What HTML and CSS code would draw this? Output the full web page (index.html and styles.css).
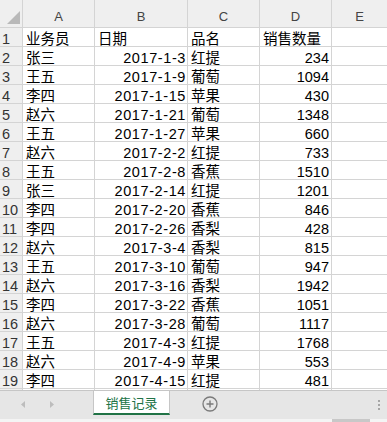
FILE: index.html
```html
<!DOCTYPE html>
<html lang="zh">
<head>
<meta charset="utf-8">
<title>销售记录</title>
<link rel="stylesheet" href="styles.css">
</head>
<body>
<div class="app">
  <div class="sheet">
    <div class="corner"><svg width="22" height="27" viewBox="0 0 22 27"><polygon points="20,11 20,24 7,24" fill="#b9b9b9"/></svg></div>
    <div class="colh">A</div><div class="colh">B</div><div class="colh">C</div><div class="colh">D</div><div class="colh">E</div>

    <div class="rowh">1</div><div class="c">业务员</div><div class="c">日期</div><div class="c">品名</div><div class="c">销售数量</div><div class="c"></div>
    <div class="rowh">2</div><div class="c">张三</div><div class="c r date">2017-1-3</div><div class="c">红提</div><div class="c r">234</div><div class="c"></div>
    <div class="rowh">3</div><div class="c">王五</div><div class="c r date">2017-1-9</div><div class="c">葡萄</div><div class="c r">1094</div><div class="c"></div>
    <div class="rowh">4</div><div class="c">李四</div><div class="c r date">2017-1-15</div><div class="c">苹果</div><div class="c r">430</div><div class="c"></div>
    <div class="rowh">5</div><div class="c">赵六</div><div class="c r date">2017-1-21</div><div class="c">葡萄</div><div class="c r">1348</div><div class="c"></div>
    <div class="rowh">6</div><div class="c">王五</div><div class="c r date">2017-1-27</div><div class="c">苹果</div><div class="c r">660</div><div class="c"></div>
    <div class="rowh">7</div><div class="c">赵六</div><div class="c r date">2017-2-2</div><div class="c">红提</div><div class="c r">733</div><div class="c"></div>
    <div class="rowh">8</div><div class="c">王五</div><div class="c r date">2017-2-8</div><div class="c">香蕉</div><div class="c r">1510</div><div class="c"></div>
    <div class="rowh">9</div><div class="c">张三</div><div class="c r date">2017-2-14</div><div class="c">红提</div><div class="c r">1201</div><div class="c"></div>
    <div class="rowh">10</div><div class="c">李四</div><div class="c r date">2017-2-20</div><div class="c">香蕉</div><div class="c r">846</div><div class="c"></div>
    <div class="rowh">11</div><div class="c">李四</div><div class="c r date">2017-2-26</div><div class="c">香梨</div><div class="c r">428</div><div class="c"></div>
    <div class="rowh">12</div><div class="c">赵六</div><div class="c r date">2017-3-4</div><div class="c">香梨</div><div class="c r">815</div><div class="c"></div>
    <div class="rowh">13</div><div class="c">王五</div><div class="c r date">2017-3-10</div><div class="c">葡萄</div><div class="c r">947</div><div class="c"></div>
    <div class="rowh">14</div><div class="c">赵六</div><div class="c r date">2017-3-16</div><div class="c">香梨</div><div class="c r">1942</div><div class="c"></div>
    <div class="rowh">15</div><div class="c">李四</div><div class="c r date">2017-3-22</div><div class="c">香蕉</div><div class="c r">1051</div><div class="c"></div>
    <div class="rowh">16</div><div class="c">赵六</div><div class="c r date">2017-3-28</div><div class="c">葡萄</div><div class="c r">1117</div><div class="c"></div>
    <div class="rowh">17</div><div class="c">王五</div><div class="c r date">2017-4-3</div><div class="c">红提</div><div class="c r">1768</div><div class="c"></div>
    <div class="rowh">18</div><div class="c">赵六</div><div class="c r date">2017-4-9</div><div class="c">苹果</div><div class="c r">553</div><div class="c"></div>
    <div class="rowh">19</div><div class="c">李四</div><div class="c r date">2017-4-15</div><div class="c">红提</div><div class="c r">481</div><div class="c"></div>
    <div class="rowh"></div><div class="c"></div><div class="c"></div><div class="c"></div><div class="c"></div><div class="c"></div>
  </div>
  <div class="tabbar">
    <div class="nav">
      <svg width="70" height="28" viewBox="0 0 70 28"><polygon points="25,10 25,17 21,13.5" fill="#bdbdbd"/><polygon points="50,10 50,17 54,13.5" fill="#bdbdbd"/></svg>
    </div>
    <div class="tab">销售记录</div>
    <div class="add"><svg width="16" height="16" viewBox="0 0 16 16"><circle cx="8" cy="8" r="7" fill="none" stroke="#7a7a7a" stroke-width="1.3"/><path d="M8 4.5v7M4.5 8h7" stroke="#7a7a7a" stroke-width="1.4"/></svg></div>
    <div class="dots"><span></span><span></span><span></span></div>
  </div>
  <div class="hscroll"><div class="thumb"></div></div>
</div>
</body>
</html>
```
FILE: styles.css
```css
html, body {
  margin: 0;
  padding: 0;
  background: #ffffff;
}
.app {
  width: 387px;
  height: 422px;
  display: flex;
  flex-direction: column;
  overflow: hidden;
  font-family: "Liberation Sans", "Noto Sans CJK SC", sans-serif;
}
.sheet {
  height: 390px;
  flex: none;
  overflow: hidden;
  display: grid;
  grid-template-columns: 22px 71px 92px 71px 71px 1fr;
  grid-template-rows: 27px;
  grid-auto-rows: 18px;
  gap: 1px;
  background: #d4d4d4;
}
.corner {
  background: #efefef;
  display: flex;
}
.colh {
  background: #efefef;
  color: #444444;
  font-size: 13px;
  line-height: 15px;
  display: flex;
  align-items: flex-end;
  justify-content: center;
  padding-bottom: 3px;
}
.rowh {
  background: #efefef;
  color: #333333;
  font-size: 14.5px;
  line-height: 16px;
  padding: 3px 0 0 2px;
  overflow: hidden;
}
.c {
  background: #ffffff;
  color: #000000;
  font-size: 14.5px;
  line-height: 16px;
  padding: 3px 3px 0 3px;
  overflow: hidden;
  white-space: nowrap;
}
.r {
  text-align: right;
  padding-right: 2px;
}
.date {
  letter-spacing: 0.6px;
  padding-right: 1px;
}
.tabbar {
  flex: none;
  height: 28px;
  border-top: 1px solid #c6c6c6;
  background: #e6e6e6;
  display: flex;
  align-items: flex-start;
}
.nav {
  width: 70px;
  height: 28px;
  flex: none;
  margin-right: 23px;
}
.tab {
  flex: none;
  width: 75px;
  background: #ffffff;
  border-left: 1px solid #c6c6c6;
  border-right: 1px solid #c6c6c6;
  border-bottom: 2px solid #217346;
  color: #217346;
  font-family: "Noto Sans CJK SC", sans-serif;
  font-size: 13px;
  line-height: 16px;
  padding-top: 4px;
  box-sizing: content-box;
  text-align: center;
  height: 18px;
}
.add {
  flex: none;
  margin: 5px 0 0 32px;
  width: 16px;
  height: 16px;
  display: flex;
}
.dots {
  margin: 9px 7px 0 auto;
  display: flex;
  flex-direction: column;
  gap: 2px;
}
.dots span {
  display: block;
  width: 2px;
  height: 2px;
  background: #a6a6a6;
}
.hscroll {
  flex: 1;
  background: #f4f4f4;
  display: flex;
}
.thumb {
  margin-left: 332px;
  width: 38px;
  background: #c8c8c8;
}
```
